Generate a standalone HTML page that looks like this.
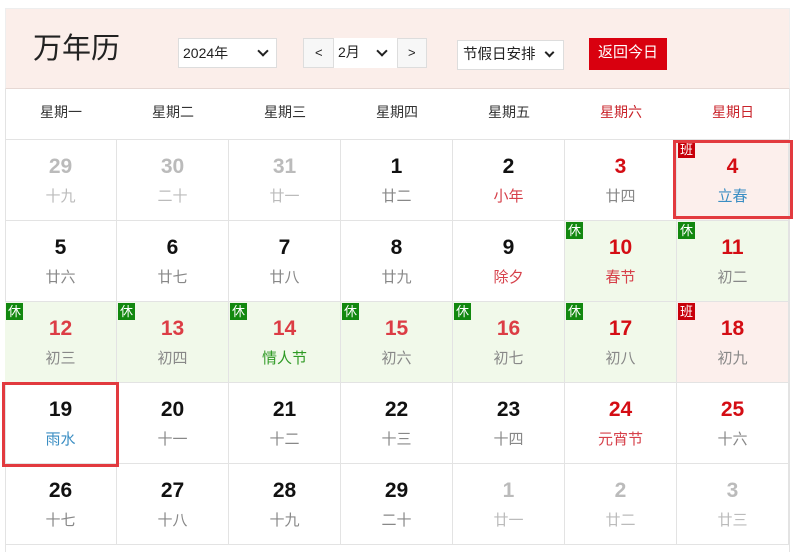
<!DOCTYPE html>
<html><head><meta charset="utf-8"><style>
*{box-sizing:border-box;margin:0;padding:0}
body{width:797px;height:552px;background:#fff;font-family:"Liberation Sans","Noto Sans CJK SC",sans-serif;position:relative;overflow:hidden}
.hdr{position:absolute;left:5px;top:8px;width:785px;height:81px;background:#fbeeea;border:1px solid #eee;border-bottom:1px solid #e6d8d4}
.t{position:absolute;left:33px;top:25px;font-size:29px;color:#222}
.sel{position:absolute;background:#fff;border:1px solid #ddd;font-size:14px;color:#222;height:30px;line-height:28px}
.chev{position:absolute;width:8px;height:8px;border-right:2px solid #222;border-bottom:2px solid #222;transform:rotate(45deg)}
.btn{position:absolute;left:589px;top:38px;width:78px;height:32px;background:#d9000f;color:#fff;font-size:15px;line-height:30px;text-align:center}
.wk{position:absolute;top:89px;height:51px;width:112px;text-align:center;font-size:14px;line-height:47px;color:#333}
.c{position:absolute;width:112px;height:81px;border-right:1px solid #e3e3e3;border-bottom:1px solid #e3e3e3;text-align:center}
.n{position:absolute;left:0;right:0;top:15px;font-size:21px;font-weight:bold;color:#111}
.l{position:absolute;left:0;right:0;top:45px;font-size:15px;color:#888}
.b{position:absolute;left:1px;top:1px;width:17px;height:17px;font-size:13px;line-height:17px;color:#fff;text-align:center}
.g{background:#f1f9ea}.p{background:#fcefec}
</style></head><body>
<div class="hdr"></div>
<div class="t">万年历</div>
<div class="sel" style="left:178px;top:38px;width:99px;padding-left:4px">2024年<span class="chev" style="left:80px;top:8px"></span></div>
<div class="sel" style="left:303px;top:38px;width:124px;background:#f7f7f7"><span style="position:absolute;left:11px;font-size:13px">&lt;</span><span style="position:absolute;left:29px;top:-1px;width:65px;height:30px;background:#fff;border-left:1px solid #ddd;border-right:1px solid #ddd;padding-left:4px">2月<span class="chev" style="left:44px;top:9px"></span></span><span style="position:absolute;left:104px;font-size:13px">&gt;</span></div>
<div class="sel" style="left:457px;top:40px;width:107px;padding-left:5px;font-size:14.5px">节假日安排<span class="chev" style="left:88px;top:8px;width:7px;height:7px"></span></div>
<div class="btn">返回今日</div>
<div style="position:absolute;left:5px;top:89px;width:785px;height:463px;border-left:1px solid #e3e3e3;border-right:1px solid #e3e3e3"></div>
<div class="wk" style="left:5px">星期一</div><div class="wk" style="left:117px">星期二</div><div class="wk" style="left:229px">星期三</div><div class="wk" style="left:341px">星期四</div><div class="wk" style="left:453px">星期五</div><div class="wk" style="left:565px;color:#c9242b">星期六</div><div class="wk" style="left:677px;color:#c9242b">星期日</div>
<div style="position:absolute;left:5px;top:139px;width:785px;border-top:1px solid #e3e3e3"></div>

<div class="c" style="left:5px;top:140px"><div class="n" style="color:#bbb">29</div><div class="l" style="color:#bbb">十九</div></div>
<div class="c" style="left:117px;top:140px"><div class="n" style="color:#bbb">30</div><div class="l" style="color:#bbb">二十</div></div>
<div class="c" style="left:229px;top:140px"><div class="n" style="color:#bbb">31</div><div class="l" style="color:#bbb">廿一</div></div>
<div class="c" style="left:341px;top:140px"><div class="n">1</div><div class="l">廿二</div></div>
<div class="c" style="left:453px;top:140px"><div class="n">2</div><div class="l" style="color:#d6404a">小年</div></div>
<div class="c" style="left:565px;top:140px"><div class="n" style="color:#d40d14">3</div><div class="l">廿四</div></div>
<div class="c p" style="left:677px;top:140px"><div class="b" style="background:#c8000a">班</div><div class="n" style="color:#d40d14">4</div><div class="l" style="color:#3b8ec3">立春</div></div>

<div class="c" style="left:5px;top:221px"><div class="n">5</div><div class="l">廿六</div></div>
<div class="c" style="left:117px;top:221px"><div class="n">6</div><div class="l">廿七</div></div>
<div class="c" style="left:229px;top:221px"><div class="n">7</div><div class="l">廿八</div></div>
<div class="c" style="left:341px;top:221px"><div class="n">8</div><div class="l">廿九</div></div>
<div class="c" style="left:453px;top:221px"><div class="n">9</div><div class="l" style="color:#d6404a">除夕</div></div>
<div class="c g" style="left:565px;top:221px"><div class="b" style="background:#12880f">休</div><div class="n" style="color:#d40d14">10</div><div class="l" style="color:#d6404a">春节</div></div>
<div class="c g" style="left:677px;top:221px"><div class="b" style="background:#12880f">休</div><div class="n" style="color:#d40d14">11</div><div class="l">初二</div></div>

<div class="c g" style="left:5px;top:302px"><div class="b" style="background:#12880f">休</div><div class="n" style="color:#dc3d45">12</div><div class="l">初三</div></div>
<div class="c g" style="left:117px;top:302px"><div class="b" style="background:#12880f">休</div><div class="n" style="color:#dc3d45">13</div><div class="l">初四</div></div>
<div class="c g" style="left:229px;top:302px"><div class="b" style="background:#12880f">休</div><div class="n" style="color:#dc3d45">14</div><div class="l" style="color:#2f9a25">情人节</div></div>
<div class="c g" style="left:341px;top:302px"><div class="b" style="background:#12880f">休</div><div class="n" style="color:#dc3d45">15</div><div class="l">初六</div></div>
<div class="c g" style="left:453px;top:302px"><div class="b" style="background:#12880f">休</div><div class="n" style="color:#dc3d45">16</div><div class="l">初七</div></div>
<div class="c g" style="left:565px;top:302px"><div class="b" style="background:#12880f">休</div><div class="n" style="color:#d40d14">17</div><div class="l">初八</div></div>
<div class="c p" style="left:677px;top:302px"><div class="b" style="background:#c8000a">班</div><div class="n" style="color:#d40d14">18</div><div class="l">初九</div></div>

<div class="c" style="left:5px;top:383px"><div class="n">19</div><div class="l" style="color:#3b8ec3">雨水</div></div>
<div class="c" style="left:117px;top:383px"><div class="n">20</div><div class="l">十一</div></div>
<div class="c" style="left:229px;top:383px"><div class="n">21</div><div class="l">十二</div></div>
<div class="c" style="left:341px;top:383px"><div class="n">22</div><div class="l">十三</div></div>
<div class="c" style="left:453px;top:383px"><div class="n">23</div><div class="l">十四</div></div>
<div class="c" style="left:565px;top:383px"><div class="n" style="color:#d40d14">24</div><div class="l" style="color:#d6404a">元宵节</div></div>
<div class="c" style="left:677px;top:383px"><div class="n" style="color:#d40d14">25</div><div class="l">十六</div></div>

<div class="c" style="left:5px;top:464px"><div class="n">26</div><div class="l">十七</div></div>
<div class="c" style="left:117px;top:464px"><div class="n">27</div><div class="l">十八</div></div>
<div class="c" style="left:229px;top:464px"><div class="n">28</div><div class="l">十九</div></div>
<div class="c" style="left:341px;top:464px"><div class="n">29</div><div class="l">二十</div></div>
<div class="c" style="left:453px;top:464px"><div class="n" style="color:#bbb">1</div><div class="l" style="color:#bbb">廿一</div></div>
<div class="c" style="left:565px;top:464px"><div class="n" style="color:#bbb">2</div><div class="l" style="color:#bbb">廿二</div></div>
<div class="c" style="left:677px;top:464px"><div class="n" style="color:#bbb">3</div><div class="l" style="color:#bbb">廿三</div></div>

<div style="position:absolute;left:673px;top:140px;width:120px;height:79px;border:3px solid #e23a3f"></div>
<div style="position:absolute;left:2px;top:382px;width:117px;height:85px;border:3px solid #e23a3f"></div>
</body></html>
